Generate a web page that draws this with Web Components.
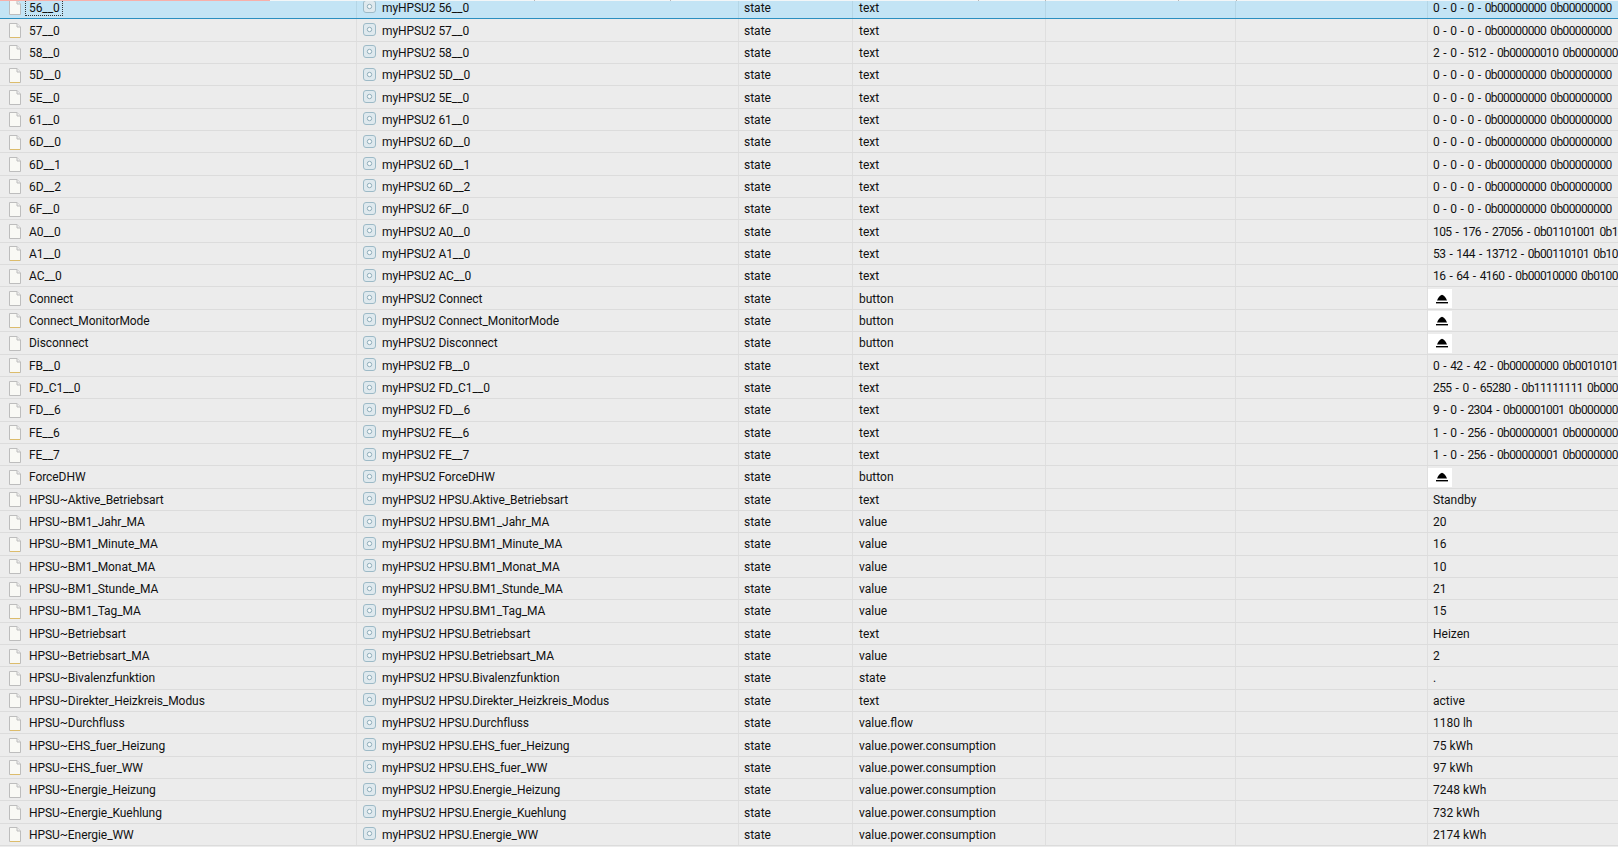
<!DOCTYPE html>
<html>
<head>
<meta charset="utf-8">
<title>myHPSU2 objects</title>
<style>
  html,body{margin:0;height:100%;overflow:hidden;background:#ececec}
  body{font-family:Roboto,"Noto Sans","Liberation Sans",sans-serif;font-size:12px;color:#111}
</style>
</head>
<body>
<object-table id="table"></object-table>

<template id="rowTpl">
  <style>
    :host{
      display:grid;
      grid-template-columns:357px 382px 114px 193px 190px 192px 1fr;
      height:22.35px;
      box-sizing:border-box;
      border-bottom:1px solid #dcdcdc;
      background:#ececec;
      overflow:hidden;
      white-space:nowrap;
    }
    :host([selected]){background:#c3e4f5;border-bottom:1px solid #2b8fc0}
    .cell{
      display:flex;align-items:center;
      min-width:0;overflow:hidden;
      padding-top:1px;
      border-right:1px solid #dfdfdf;
      box-sizing:border-box;
    }
    :host([selected]) .cell{border-right-color:#b5d6e6;padding-top:0}
    .cell:last-child{border-right:0}
    .id{padding-left:9px;gap:4px;letter-spacing:-.07px}
    .name{padding-left:6px;gap:6px;letter-spacing:-.07px}
    .type{padding-left:5px}
    .role{padding-left:6px}
    .val{padding-left:5px}
    :host([bits]) .val{letter-spacing:-.6px;word-spacing:1.8px}
    .focus{padding:1px 3px 1px 4px;outline:1px dotted transparent;outline-offset:-1px}
    :host([selected]) .focus{outline-color:#333}
    :host([button]) .val{padding-left:0}
  </style>
  <div class="cell id"><file-icon></file-icon><span class="focus"><slot name="id"></slot></span></div>
  <div class="cell name"><state-icon></state-icon><span><slot name="name"></slot></span></div>
  <div class="cell type"><slot name="type"></slot></div>
  <div class="cell role"><slot name="role"></slot></div>
  <div class="cell"></div>
  <div class="cell"></div>
  <div class="cell val"><slot name="value"></slot></div>
</template>

<script>
class FileIcon extends HTMLElement {
    constructor() {
        super();
        const root = this.attachShadow({ mode: 'open' });
        root.innerHTML = `
      <style>
        :host{display:block;width:12px;height:15px;flex:none}
        svg{display:block}
      </style>
      <svg width="12" height="15" viewBox="0 0 12 15">
        <path d="M.5.5H8L11.5 4V14.5H.5Z" fill="#f9f9f5" stroke="#bdbdbd"/>
        <path d="M8 .5V4H11.5" fill="#ececec" stroke="#bdbdbd"/>
        <path id="foot" d="M1 14.5H11" stroke="#bdbdbd"/>
      </svg>`;
    }
    connectedCallback() {
        if (this.getRootNode().host?.hasAttribute('warm')) {
            this.shadowRoot.getElementById('foot').setAttribute('stroke', '#dcbc6c');
        }
    }
}

class StateIcon extends HTMLElement {
    constructor() {
        super();
        const root = this.attachShadow({ mode: 'open' });
        root.innerHTML = `
      <style>
        :host{display:block;width:13px;height:13px;flex:none;margin-top:-2px}
        svg{display:block}
      </style>
      <svg width="13" height="13" viewBox="0 0 13 13">
        <rect x=".5" y=".5" width="12" height="12" rx="2.5" fill="#dfe9ee" stroke="#9dbac7"/>
        <circle cx="6.5" cy="6.5" r="2.2" fill="#f6f9fa" stroke="#8fadba"/>
      </svg>`;
    }
}

class EjectButton extends HTMLElement {
    constructor() {
        super();
        const root = this.attachShadow({ mode: 'open' });
        root.innerHTML = `
      <style>
        :host{display:flex;align-items:center;justify-content:center;box-sizing:border-box;width:24px;height:19px;padding-left:3px;background:#fff}
        svg{display:block}
      </style>
      <svg width="12" height="10" viewBox="0 0 12 10">
        <path d="M1 6.5C2 4 4 1.2 6 .8 8 1.2 10 4 11 6.5Z" fill="#000"/>
        <rect x="0" y="8" width="12" height="1.4" fill="#000"/>
      </svg>`;
    }
}

class ObjectRow extends HTMLElement {
    constructor() {
        super();
        const root = this.attachShadow({ mode: 'open' });
        root.appendChild(document.getElementById('rowTpl').content.cloneNode(true));
    }
}

class ObjectTable extends HTMLElement {
    constructor() {
        super();
        const root = this.attachShadow({ mode: 'open' });
        // list is scrolled: first row is cut at the top edge, header strip lies over it
        root.innerHTML = `
      <style>
        :host{display:block;position:relative;height:847px;overflow:hidden}
        .list{margin-top:-3px}
        .strip{position:absolute;left:0;right:0;top:0;height:1px;background:#f2f6f8}
        .strip i{position:absolute;top:0;height:1px;width:1px;background:#b8b8b8}
        .strip b{position:absolute;left:0;top:0;height:1px;width:270px;background:#f8b0aa}
      </style>
      <div class="list"><slot></slot></div>
      <div class="strip"><b></b>
        <i style="left:534px"></i><i style="left:670px"></i><i style="left:978px"></i>
        <i style="left:1045px"></i><i style="left:1178px"></i><i style="left:1236px"></i>
      </div>`;
    }
}

customElements.define('file-icon', FileIcon);
customElements.define('state-icon', StateIcon);
customElements.define('eject-button', EjectButton);
customElements.define('object-row', ObjectRow);
customElements.define('object-table', ObjectTable);

const Z = '0 - 0 - 0 - 0b00000000 0b00000000';
const rows = [
    ['56__0', '56__0', 'text', Z],
    ['57__0', '57__0', 'text', Z],
    ['58__0', '58__0', 'text', '2 - 0 - 512 - 0b00000010 0b00000000'],
    ['5D__0', '5D__0', 'text', Z],
    ['5E__0', '5E__0', 'text', Z],
    ['61__0', '61__0', 'text', Z],
    ['6D__0', '6D__0', 'text', Z],
    ['6D__1', '6D__1', 'text', Z],
    ['6D__2', '6D__2', 'text', Z],
    ['6F__0', '6F__0', 'text', Z],
    ['A0__0', 'A0__0', 'text', '105 - 176 - 27056 - 0b01101001 0b10110000'],
    ['A1__0', 'A1__0', 'text', '53 - 144 - 13712 - 0b00110101 0b10010000'],
    ['AC__0', 'AC__0', 'text', '16 - 64 - 4160 - 0b00010000 0b01000000'],
    ['Connect', 'Connect', 'button', null],
    ['Connect_MonitorMode', 'Connect_MonitorMode', 'button', null],
    ['Disconnect', 'Disconnect', 'button', null],
    ['FB__0', 'FB__0', 'text', '0 - 42 - 42 - 0b00000000 0b00101010'],
    ['FD_C1__0', 'FD_C1__0', 'text', '255 - 0 - 65280 - 0b11111111 0b00000000'],
    ['FD__6', 'FD__6', 'text', '9 - 0 - 2304 - 0b00001001 0b00000000'],
    ['FE__6', 'FE__6', 'text', '1 - 0 - 256 - 0b00000001 0b00000000'],
    ['FE__7', 'FE__7', 'text', '1 - 0 - 256 - 0b00000001 0b00000000'],
    ['ForceDHW', 'ForceDHW', 'button', null],
    ['HPSU~Aktive_Betriebsart', 'HPSU.Aktive_Betriebsart', 'text', 'Standby'],
    ['HPSU~BM1_Jahr_MA', 'HPSU.BM1_Jahr_MA', 'value', '20'],
    ['HPSU~BM1_Minute_MA', 'HPSU.BM1_Minute_MA', 'value', '16'],
    ['HPSU~BM1_Monat_MA', 'HPSU.BM1_Monat_MA', 'value', '10'],
    ['HPSU~BM1_Stunde_MA', 'HPSU.BM1_Stunde_MA', 'value', '21'],
    ['HPSU~BM1_Tag_MA', 'HPSU.BM1_Tag_MA', 'value', '15'],
    ['HPSU~Betriebsart', 'HPSU.Betriebsart', 'text', 'Heizen'],
    ['HPSU~Betriebsart_MA', 'HPSU.Betriebsart_MA', 'value', '2'],
    ['HPSU~Bivalenzfunktion', 'HPSU.Bivalenzfunktion', 'state', '.'],
    ['HPSU~Direkter_Heizkreis_Modus', 'HPSU.Direkter_Heizkreis_Modus', 'text', 'active'],
    ['HPSU~Durchfluss', 'HPSU.Durchfluss', 'value.flow', '1180 lh'],
    ['HPSU~EHS_fuer_Heizung', 'HPSU.EHS_fuer_Heizung', 'value.power.consumption', '75 kWh'],
    ['HPSU~EHS_fuer_WW', 'HPSU.EHS_fuer_WW', 'value.power.consumption', '97 kWh'],
    ['HPSU~Energie_Heizung', 'HPSU.Energie_Heizung', 'value.power.consumption', '7248 kWh'],
    ['HPSU~Energie_Kuehlung', 'HPSU.Energie_Kuehlung', 'value.power.consumption', '732 kWh'],
    ['HPSU~Energie_WW', 'HPSU.Energie_WW', 'value.power.consumption', '2174 kWh'],
];
const warm = [1, 3, 6, 11, 14, 16, 19, 24, 27, 29, 32, 34, 37];

const table = document.getElementById('table');
rows.forEach(([id, name, role, value], i) => {
    const row = document.createElement('object-row');
    if (i === 0) row.setAttribute('selected', '');
    if (warm.includes(i)) row.setAttribute('warm', '');
    if (value === null) row.setAttribute('button', '');
    if (value && value.includes('0b')) row.setAttribute('bits', '');
    row.innerHTML = `<span slot="id">${id}</span>
      <span slot="name">myHPSU2 ${name}</span>
      <span slot="type">state</span>
      <span slot="role">${role}</span>
      ${value === null ? '<eject-button slot="value"></eject-button>' : `<span slot="value">${value}</span>`}`;
    table.appendChild(row);
});
</script>
</body>
</html>
